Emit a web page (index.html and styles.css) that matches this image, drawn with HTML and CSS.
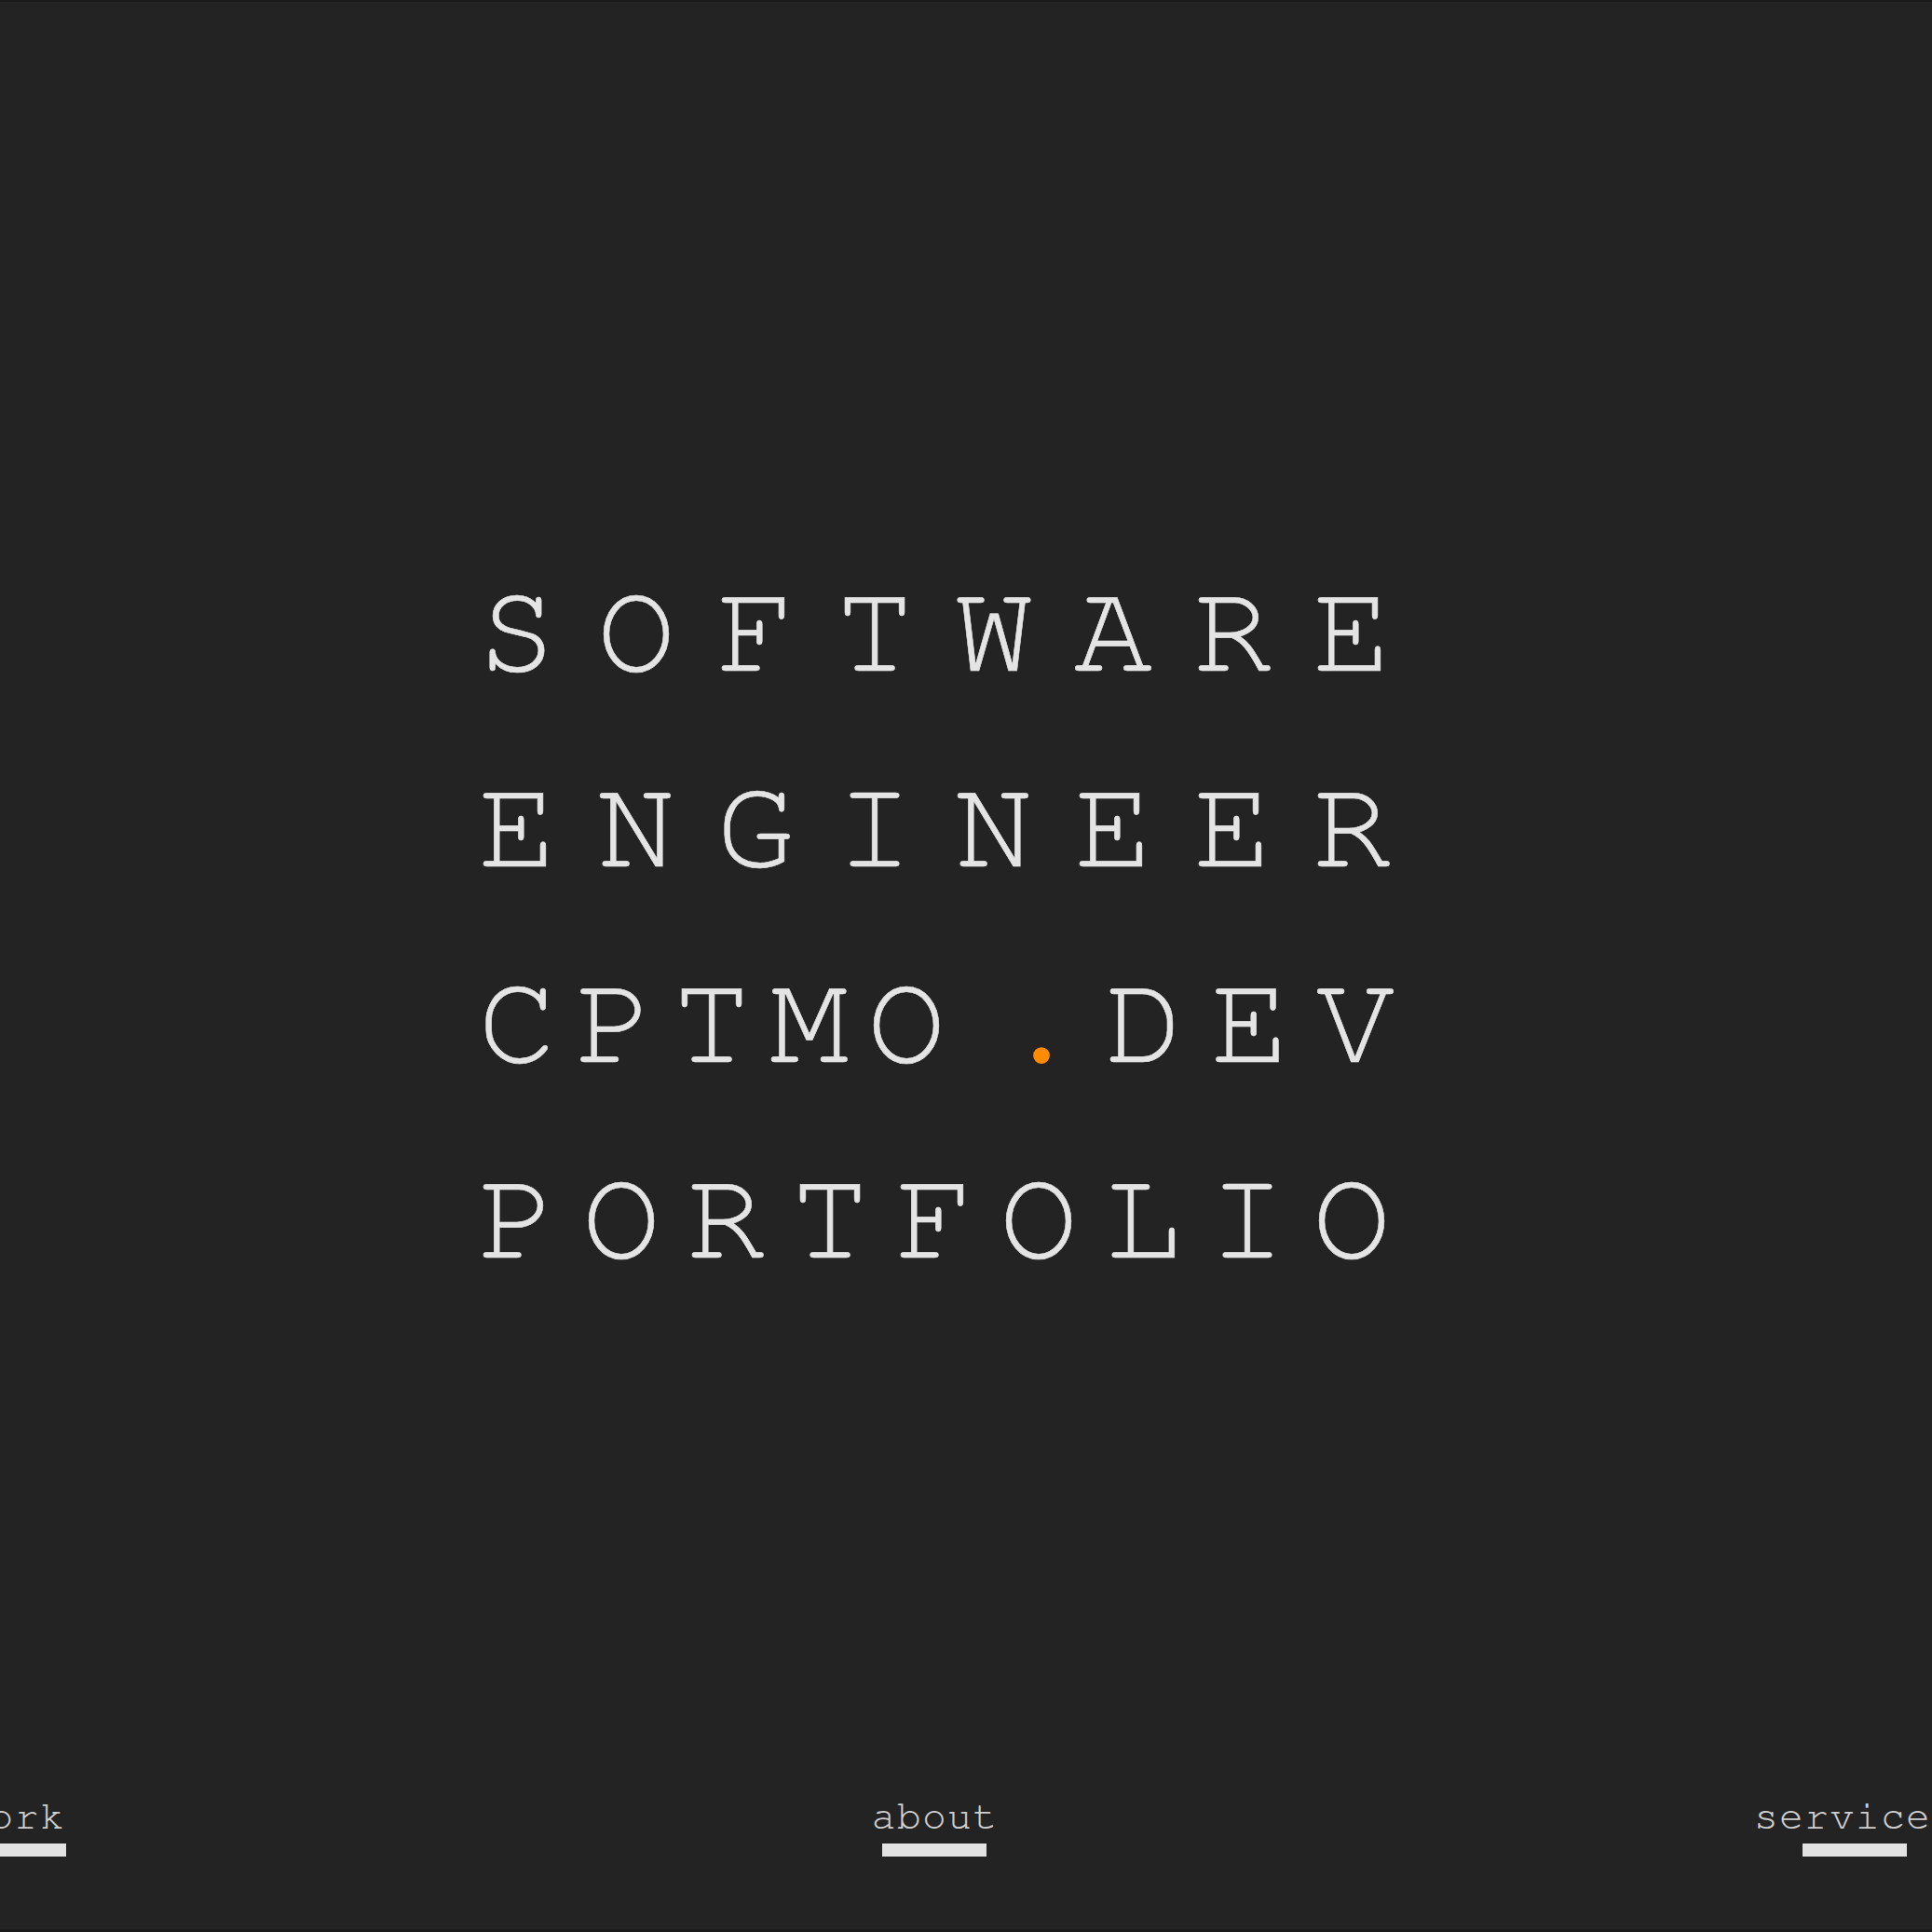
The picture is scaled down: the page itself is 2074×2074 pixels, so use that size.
FILE: index.html
```html
<!DOCTYPE html>
<html lang="en">
<head>
<meta charset="utf-8">
<title>cptmo.dev — portfolio</title>
<link rel="stylesheet" href="styles.css">
</head>
<body>
<div class="screen">
  <main class="hero">
    <h1 class="title">
      <span class="row wide">SOFTWARE</span>
      <span class="row wide">ENGINEER</span>
      <span class="row"><span class="w1">CPTMO</span><span class="dot">.</span><span class="w2">DEV</span></span>
      <span class="row narrow">PORTFOLIO</span>
    </h1>
  </main>
  <nav class="nav">
    <div class="track">
      <a class="item" href="#work"><span class="label">work</span><span class="bar"></span></a>
      <a class="item" href="#about"><span class="label">about</span><span class="bar"></span></a>
      <a class="item" href="#services"><span class="label">services</span><span class="bar"></span></a>
    </div>
  </nav>
</div>
</body>
</html>
```

FILE: styles.css
```css
html, body {
  margin: 0;
  padding: 0;
  background: #232323;
}

.screen {
  position: relative;
  box-sizing: border-box;
  height: 100vh;
  border-top: 2px solid #1a1a1a;
  border-bottom: 3px solid #1a1a1a;
  overflow: hidden;
  font-family: "Nimbus Mono PS", "Nimbus Mono L", "FreeMono", "Courier 10 Pitch", "Courier New", "Liberation Mono", monospace;
}

.hero {
  box-sizing: border-box;
  height: 100%;
  padding: 0 68px 87px 0;
  display: flex;
  align-items: center;
  justify-content: center;
}

.title {
  margin: 0;
  width: 980px;
  font-size: 140px;
  font-weight: normal;
  line-height: 210px;
  color: #e4e4e4;
  -webkit-text-stroke: 0.6px #e4e4e4;
}

.row {
  display: block;
  white-space: nowrap;
}

.wide { letter-spacing: 44px; }
.narrow { letter-spacing: 28px; }
.w1 { letter-spacing: 20.5px; }
.w2 { letter-spacing: 29.5px; }

.dot {
  display: inline-block;
  width: 84px;
  margin-left: 40.5px;
  margin-right: 26px;
  text-align: center;
  font-family: "Liberation Serif", serif;
  font-size: 150px;
  line-height: 100px;
  color: #ff8c00;
  -webkit-text-stroke: 0;
}

.nav {
  position: absolute;
  left: 0;
  right: 0;
  bottom: 0;
  padding-bottom: 78px;
}

.track {
  display: flex;
  transform: translateX(-479px);
}

.item {
  flex: none;
  width: 988px;
  display: flex;
  flex-direction: column;
  align-items: center;
  text-decoration: none;
  color: #d0d0d0;
}

.label {
  font-size: 43px;
  line-height: 36px;
  letter-spacing: 1.4px;
  margin-right: -1.4px;
  -webkit-text-stroke: 0.2px #d0d0d0;
}

.bar {
  width: 112px;
  height: 14px;
  margin-top: 10px;
  background: #e2e2e2;
}
```
